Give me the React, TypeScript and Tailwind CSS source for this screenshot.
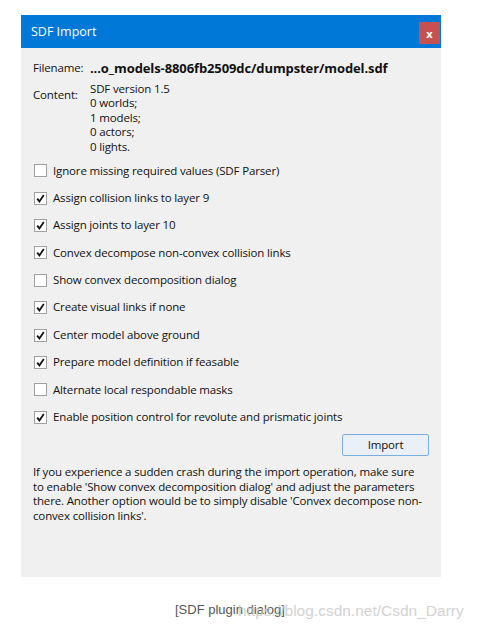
import React from "react";

const items: [string, boolean][] = [
  ["Ignore missing required values (SDF Parser)", false],
  ["Assign collision links to layer 9", true],
  ["Assign joints to layer 10", true],
  ["Convex decompose non-convex collision links", true],
  ["Show convex decomposition dialog", false],
  ["Create visual links if none", true],
  ["Center model above ground", true],
  ["Prepare model definition if feasable", true],
  ["Alternate local respondable masks", false],
  ["Enable position control for revolute and prismatic joints", true],
];

function Box({ checked }: { checked: boolean }) {
  return (
    <div className="w-[13px] h-[13px] border border-[#a0a0a0] bg-white flex items-center justify-center shrink-0">
      {checked && (
        <svg width="9" height="9" viewBox="0 0 9 9">
          <path d="M1.2 4.6 L3.4 7.4 L7.8 0.9" fill="none" stroke="#111" strokeWidth="1.8" />
        </svg>
      )}
    </div>
  );
}

export default function App() {
  return (
    <div
      className="w-[478px] h-[631px] bg-white relative overflow-hidden"
      style={{ fontFamily: '"Open Sans", "Noto Sans", sans-serif' }}
    >
      <div className="ml-[21px] pt-[15px]">
        <div className="w-[420px] h-[562px] bg-[#f0f0f0] flex flex-col">
          <div className="h-[33px] bg-[#0078d7] flex items-start justify-between shrink-0">
            <span className="text-white text-[12.5px] leading-[33px] pl-[10px]">SDF Import</span>
            <div className="mt-[7px] mr-[1px] w-[21px] h-[22px] bg-[#c75050] flex items-center justify-center text-white text-[11px] font-bold leading-none">
              x
            </div>
          </div>
          <div className="px-[12px] text-[11.5px] tracking-[-0.15px] text-[#111] leading-[14.4px]">
            <div className="flex items-center mt-[12px] h-[16px]">
              <span className="w-[57px]">Filename:</span>
              <span className="font-bold text-[13px] tracking-[-0.1px]">...o_models-8806fb2509dc/dumpster/model.sdf</span>
            </div>
            <div className="flex mt-[6px]">
              <span className="w-[57px] mt-[6px]">Content:</span>
              <div className="flex flex-col">
                <span>SDF version 1.5</span>
                <span>0 worlds;</span>
                <span>1 models;</span>
                <span>0 actors;</span>
                <span>0 lights.</span>
              </div>
            </div>
            <div className="flex flex-col mt-[3px]">
              {items.map(([label, c]) => (
                <div key={label} className="h-[27.4px] flex items-center gap-[6px] pl-[1px]">
                  <Box checked={c} />
                  <span>{label}</span>
                </div>
              ))}
            </div>
            <div className="flex justify-end mt-[3px]">
              <div className="w-[87px] h-[22px] border border-[#7ab0e6] bg-[#e9f0f7] rounded-[2px] flex items-center justify-center">
                Import
              </div>
            </div>
            <p className="mt-[9px] leading-[14.7px] w-[390px]">
              If you experience a sudden crash during the import operation, make sure to enable 'Show convex
              decomposition dialog' and adjust the parameters there. Another option would be to simply disable
              'Convex decompose non-convex collision links'.
            </p>
          </div>
        </div>
      </div>
      <div
        className="mt-[23px] ml-[175px] text-[13px] text-[#555]"
        style={{ fontFamily: '"Liberation Sans", Arial, sans-serif' }}
      >
        [SDF plugin dialog]
      </div>
      <div
        className="absolute left-[238px] top-[599px] text-[15.5px] text-[#c8c8c8] opacity-80 whitespace-nowrap"
        style={{ fontFamily: '"Liberation Sans", Arial, sans-serif' }}
      >
        https://blog.csdn.net/Csdn_Darry
      </div>
    </div>
  );
}
